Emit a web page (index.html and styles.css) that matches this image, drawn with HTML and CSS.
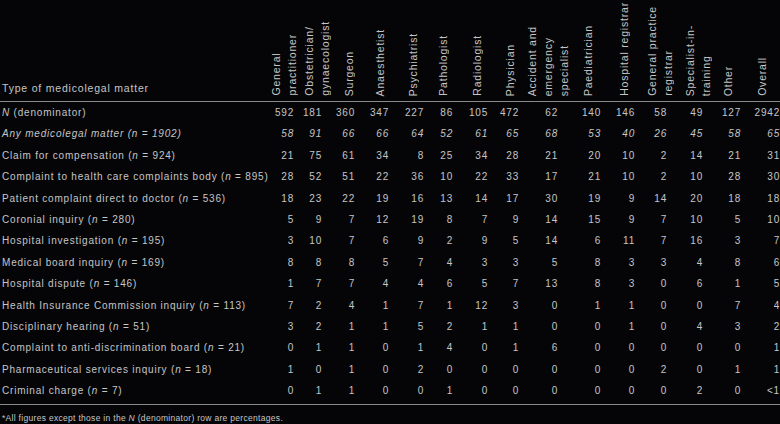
FILE: index.html
```html
<!DOCTYPE html>
<html lang="en">
<head>
<meta charset="utf-8">
<title>Types of medicolegal matter by doctor group</title>
<link rel="stylesheet" href="styles.css">
</head>
<body>
<table class="tbl">
  <colgroup>
    <col class="w-label"><col class="w-gp"><col class="w-obs"><col class="w-surg"><col class="w-anaes"><col class="w-psych"><col class="w-path"><col class="w-rad"><col class="w-phys"><col class="w-ae"><col class="w-paed"><col class="w-hreg"><col class="w-gpreg"><col class="w-sit"><col class="w-other"><col class="w-all">
  </colgroup>
  <thead>
    <tr class="hdr">
      <th class="lbl">Type of medicolegal matter</th>
      <th><div class="vh">General<br>practitioner</div></th>
      <th><div class="vh">Obstetrician/<br>gynaecologist</div></th>
      <th><div class="vh">Surgeon</div></th>
      <th><div class="vh">Anaesthetist</div></th>
      <th><div class="vh">Psychiatrist</div></th>
      <th><div class="vh">Pathologist</div></th>
      <th><div class="vh">Radiologist</div></th>
      <th><div class="vh">Physician</div></th>
      <th><div class="vh">Accident and<br>emergency<br>specialist</div></th>
      <th><div class="vh">Paediatrician</div></th>
      <th><div class="vh">Hospital registrar</div></th>
      <th><div class="vh">General practice<br>registrar</div></th>
      <th><div class="vh">Specialist-in-<br>training</div></th>
      <th><div class="vh">Other</div></th>
      <th><div class="vh">Overall</div></th>
    </tr>
  </thead>
  <tbody>
    <tr><td class="lbl"><i>N</i> (denominator)</td><td>592</td><td>181</td><td>360</td><td>347</td><td>227</td><td>86</td><td>105</td><td>472</td><td>62</td><td>140</td><td>146</td><td>58</td><td>49</td><td>127</td><td>2942</td></tr>
    <tr class="it"><td class="lbl">Any medicolegal matter (n = 1902)</td><td>58</td><td>91</td><td>66</td><td>66</td><td>64</td><td>52</td><td>61</td><td>65</td><td>68</td><td>53</td><td>40</td><td>26</td><td>45</td><td>58</td><td>65</td></tr>
    <tr><td class="lbl">Claim for compensation (<i>n</i> = 924)</td><td>21</td><td>75</td><td>61</td><td>34</td><td>8</td><td>25</td><td>34</td><td>28</td><td>21</td><td>20</td><td>10</td><td>2</td><td>14</td><td>21</td><td>31</td></tr>
    <tr><td class="lbl">Complaint to health care complaints body (<i>n</i> = 895)</td><td>28</td><td>52</td><td>51</td><td>22</td><td>36</td><td>10</td><td>22</td><td>33</td><td>17</td><td>21</td><td>10</td><td>2</td><td>10</td><td>28</td><td>30</td></tr>
    <tr><td class="lbl">Patient complaint direct to doctor (<i>n</i> = 536)</td><td>18</td><td>23</td><td>22</td><td>19</td><td>16</td><td>13</td><td>14</td><td>17</td><td>30</td><td>19</td><td>9</td><td>14</td><td>20</td><td>18</td><td>18</td></tr>
    <tr><td class="lbl">Coronial inquiry (<i>n</i> = 280)</td><td>5</td><td>9</td><td>7</td><td>12</td><td>19</td><td>8</td><td>7</td><td>9</td><td>14</td><td>15</td><td>9</td><td>7</td><td>10</td><td>5</td><td>10</td></tr>
    <tr><td class="lbl">Hospital investigation (<i>n</i> = 195)</td><td>3</td><td>10</td><td>7</td><td>6</td><td>9</td><td>2</td><td>9</td><td>5</td><td>14</td><td>6</td><td>11</td><td>7</td><td>16</td><td>3</td><td>7</td></tr>
    <tr><td class="lbl">Medical board inquiry (<i>n</i> = 169)</td><td>8</td><td>8</td><td>8</td><td>5</td><td>7</td><td>4</td><td>3</td><td>3</td><td>5</td><td>8</td><td>3</td><td>3</td><td>4</td><td>8</td><td>6</td></tr>
    <tr><td class="lbl">Hospital dispute (<i>n</i> = 146)</td><td>1</td><td>7</td><td>7</td><td>4</td><td>4</td><td>6</td><td>5</td><td>7</td><td>13</td><td>8</td><td>3</td><td>0</td><td>6</td><td>1</td><td>5</td></tr>
    <tr><td class="lbl">Health Insurance Commission inquiry (<i>n</i> = 113)</td><td>7</td><td>2</td><td>4</td><td>1</td><td>7</td><td>1</td><td>12</td><td>3</td><td>0</td><td>1</td><td>1</td><td>0</td><td>0</td><td>7</td><td>4</td></tr>
    <tr><td class="lbl">Disciplinary hearing (<i>n</i> = 51)</td><td>3</td><td>2</td><td>1</td><td>1</td><td>5</td><td>2</td><td>1</td><td>1</td><td>0</td><td>0</td><td>1</td><td>0</td><td>4</td><td>3</td><td>2</td></tr>
    <tr><td class="lbl">Complaint to anti-discrimination board (<i>n</i> = 21)</td><td>0</td><td>1</td><td>1</td><td>0</td><td>1</td><td>4</td><td>0</td><td>1</td><td>6</td><td>0</td><td>0</td><td>0</td><td>0</td><td>0</td><td>1</td></tr>
    <tr><td class="lbl">Pharmaceutical services inquiry (<i>n</i> = 18)</td><td>1</td><td>0</td><td>1</td><td>0</td><td>2</td><td>0</td><td>0</td><td>0</td><td>0</td><td>0</td><td>0</td><td>2</td><td>0</td><td>1</td><td>1</td></tr>
    <tr class="last"><td class="lbl">Criminal charge (<i>n</i> = 7)</td><td>0</td><td>1</td><td>1</td><td>0</td><td>0</td><td>1</td><td>0</td><td>0</td><td>0</td><td>0</td><td>0</td><td>0</td><td>2</td><td>0</td><td>&lt;1</td></tr>
  </tbody>
</table>
<p class="note">*All figures except those in the <i>N</i> (denominator) row are percentages.</p>
</body>
</html>
```
FILE: styles.css
```css
html, body {
  margin: 0;
  padding: 0;
  background: #050508;
}
body {
  width: 780px;
  height: 424px;
  overflow: hidden;
  color: #c6c6c6;
  font-family: "Liberation Sans", Arial, sans-serif;
  font-size: 10px;
  letter-spacing: 0.8px;
}
.tbl {
  border-collapse: collapse;
  table-layout: fixed;
  width: 780px;
}
.w-label { width: 266px; }
.w-gp { width: 29px; }
.w-obs { width: 28px; }
.w-surg { width: 33px; }
.w-anaes { width: 34px; }
.w-psych { width: 35px; }
.w-path { width: 29px; }
.w-rad { width: 35px; }
.w-phys { width: 31px; }
.w-ae { width: 39px; }
.w-paed { width: 43px; }
.w-hreg { width: 34px; }
.w-gpreg { width: 32px; }
.w-sit { width: 36px; }
.w-other { width: 38px; }
.w-all { width: 39px; }

.hdr th {
  height: 96px;
  padding: 0 0 5px 0;
  vertical-align: bottom;
  text-align: left;
  font-weight: normal;
  font-size: 10.5px;
  line-height: 16px;
  white-space: nowrap;
  overflow: visible;
  border-bottom: 1px solid #8a8a8a;
}
.hdr th.lbl {
  padding-left: 2px;
}
.vh {
  display: inline-block;
  vertical-align: bottom;
  writing-mode: vertical-rl;
  transform: rotate(180deg);
  line-height: 16px;
  white-space: nowrap;
}
.hdr th:nth-child(2) .vh { margin-left: 2px; }
.hdr th:nth-child(3) .vh { margin-left: 6px; }
.hdr th:nth-child(4) .vh { margin-left: 18px; }
.hdr th:nth-child(5) .vh { margin-left: 16px; }
.hdr th:nth-child(6) .vh { margin-left: 15px; }
.hdr th:nth-child(7) .vh { margin-left: 10px; }
.hdr th:nth-child(8) .vh { margin-left: 15px; }
.hdr th:nth-child(9) .vh { margin-left: 13px; }
.hdr th:nth-child(10) .vh { margin-left: 4px; }
.hdr th:nth-child(11) .vh { margin-left: 21px; }
.hdr th:nth-child(12) .vh { margin-left: 14px; }
.hdr th:nth-child(13) .vh { margin-left: 8px; }
.hdr th:nth-child(14) .vh { margin-left: 14px; }
.hdr th:nth-child(15) .vh { margin-left: 16px; }
.hdr th:nth-child(16) .vh { margin-left: 12px; }

tbody td {
  padding: 0 1px 0 0;
  line-height: 21.4px;
  text-align: right;
  white-space: nowrap;
  overflow: visible;
}
tbody td.lbl {
  text-align: left;
  padding: 0 0 0 2px;
}
tbody tr.it td {
  font-style: italic;
}
tbody tr.last td {
  padding-bottom: 2px;
  border-bottom: 1px solid #8a8a8a;
}
.note {
  margin: 0;
  padding: 7px 0 0 2px;
  font-size: 8.5px;
  line-height: 12px;
  letter-spacing: 0.3px;
}
```
